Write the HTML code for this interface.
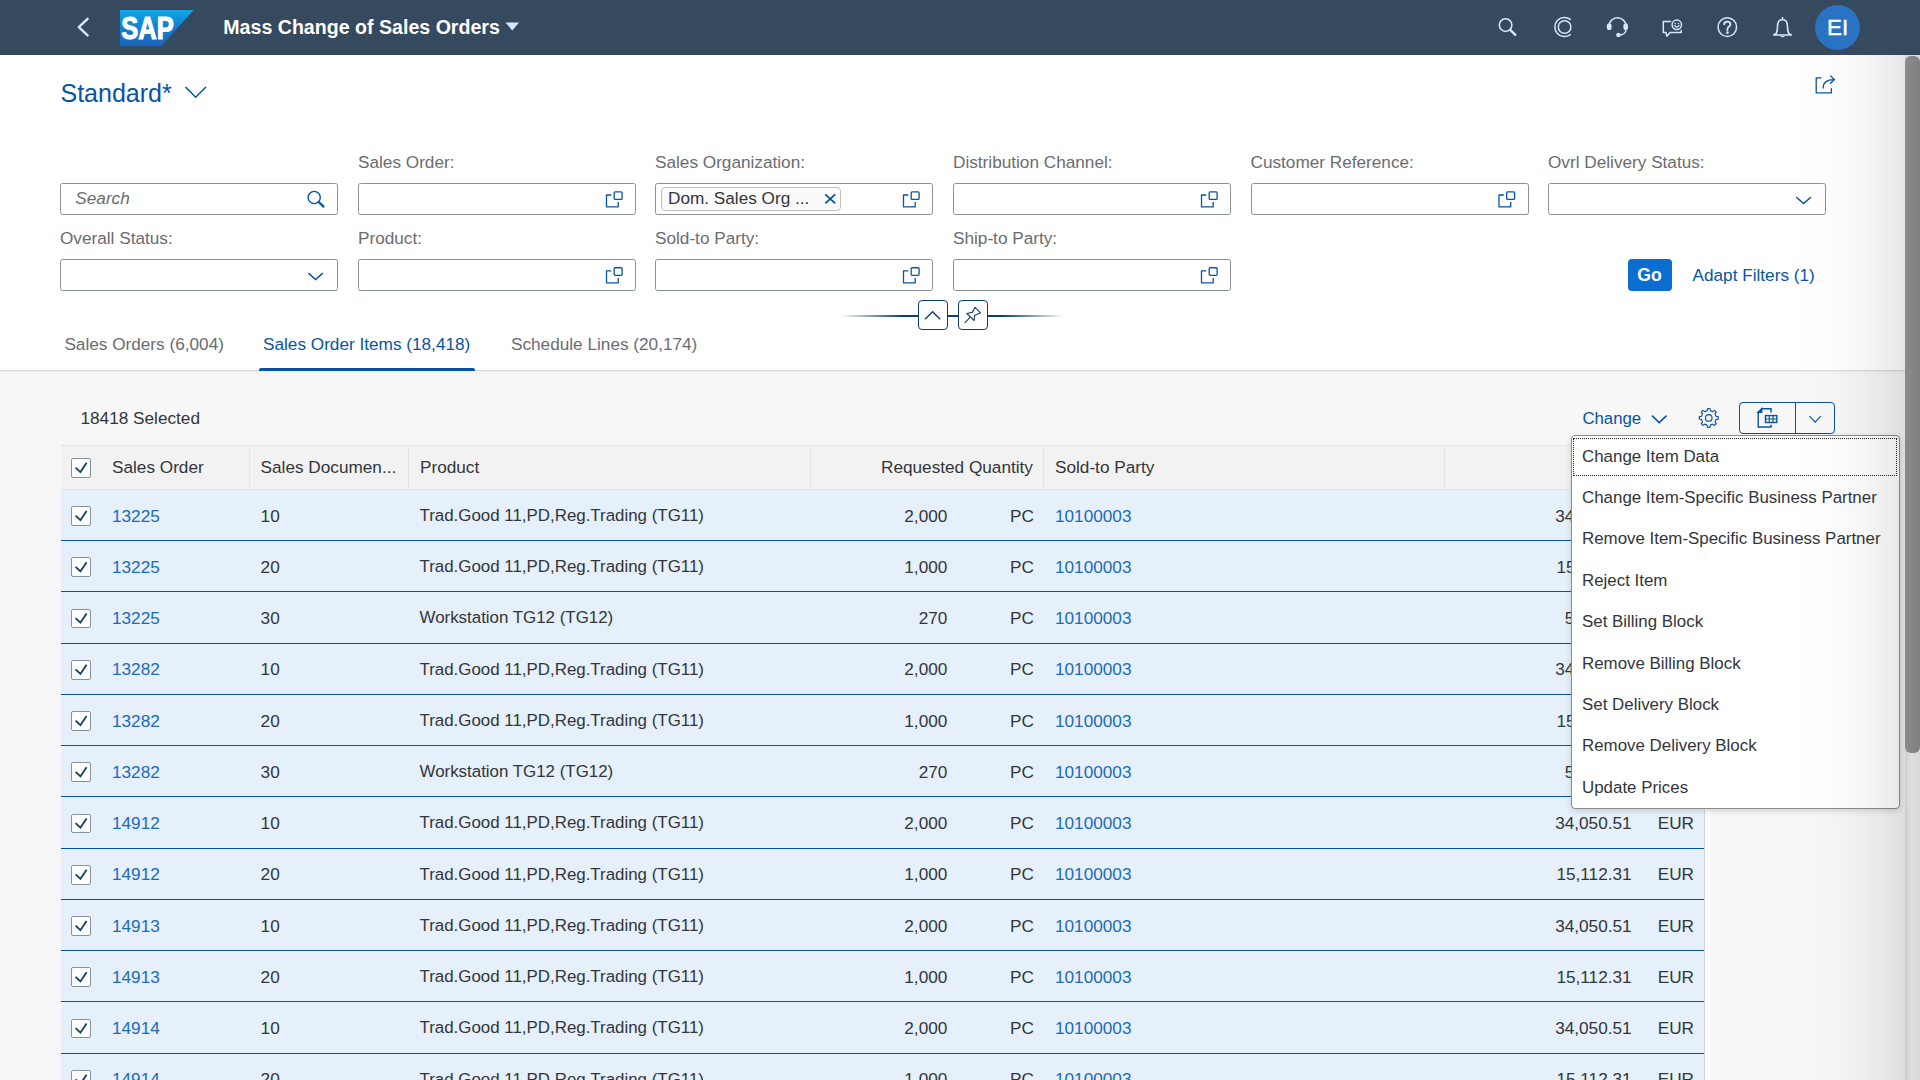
<!DOCTYPE html><html><head><meta charset="utf-8"><style>
*{margin:0;padding:0;box-sizing:border-box}
html,body{width:1920px;height:1080px;overflow:hidden;background:#f7f7f7;font-family:"Liberation Sans",sans-serif}
.t{position:absolute;line-height:1;white-space:nowrap}
.a{position:absolute}
svg{position:absolute;overflow:visible}
</style></head><body>
<div class="a" style="left:0;top:0;width:1920px;height:54.5px;background:#354a5f"></div>
<svg style="left:0;top:0" width="1" height="1"><path d="M87.6 18.8 L78.8 27.2 L87.6 35.4" fill="none" stroke="#d1e8ff" stroke-width="2.4" stroke-linecap="round" stroke-linejoin="round"/></svg>
<svg style="left:0;top:0" width="1" height="1"><defs><linearGradient id="lg" x1="0" y1="0" x2="0" y2="1"><stop offset="0" stop-color="#12a6e8"/><stop offset="0.35" stop-color="#1189d6"/><stop offset="0.7" stop-color="#1673c6"/><stop offset="1" stop-color="#1a64b8"/></linearGradient></defs>
<path d="M120 10 H193.8 L161 46.3 H120 Z" fill="url(#lg)"/>
<text x="121.2" y="39.2" font-family="Liberation Sans" font-weight="700" font-size="31" fill="#fff" stroke="#fff" stroke-width="1.1" textLength="52.5" lengthAdjust="spacingAndGlyphs">SAP</text></svg>
<div class="t" style="left:223.30px;top:17.61px;font-size:19.6px;color:#fff;font-weight:700;">Mass Change of Sales Orders</div>
<svg style="left:0;top:0" width="1" height="1"><path d="M505.5 22.5 H519 L512.25 30.5 Z" fill="#d1e8ff"/></svg>
<svg style="left:0;top:0" width="1" height="1">
<g fill="none" stroke="#d1e8ff" stroke-width="1.5" stroke-linecap="round">
 <circle cx="1505.6" cy="25.1" r="6.3"/>
 <path d="M1510 29.6 L1515.3 34.9" stroke-width="2.3"/>
 <path d="M1570.3 19.4 A9.6 9.6 0 1 0 1570.3 34.6"/>
 <circle cx="1564.6" cy="27" r="6.3"/>
 <path d="M1608.8 26.5 A8.7 8.7 0 0 1 1626.2 26.5"/>
 <path d="M1626 30 Q1625.5 34.6 1619 35.2"/>
 <circle cx="1727.3" cy="27.1" r="9.3"/>
 <path d="M1724.2 24.3 Q1724.2 21.6 1727.3 21.6 Q1730.4 21.6 1730.4 24.2 Q1730.4 26 1728.5 27 Q1727.4 27.7 1727.4 30" stroke-width="1.9"/>
 <path d="M1670.6 21.4 H1663.3 V32.4 H1666 L1666.8 36.2 L1670.2 32.4 H1681.2 V30.6" stroke-linejoin="round"/>
 <circle cx="1676.8" cy="24.8" r="4.7"/>
 <path d="M1674.6 25.6 Q1676.8 28.4 1679 25.6" stroke-width="1.3"/>
 <path d="M1782.5 17.6 V19.2 M1776.3 33.3 Q1777.6 30.5 1777.5 26.3 Q1777.6 19.6 1782.5 19.5 Q1787.4 19.6 1787.5 26.3 Q1787.4 30.5 1788.7 33.3 L1791.3 35 H1773.7 Z" stroke-linejoin="round" stroke-width="1.6"/>
</g>
<g fill="#d1e8ff">
 <rect x="1606.8" y="23.6" width="4.8" height="6.5" rx="2"/>
 <rect x="1623.4" y="23.6" width="4.6" height="6.5" rx="2"/>
 <circle cx="1618.4" cy="35" r="2.2"/>
 <circle cx="1727.4" cy="32.6" r="1.4"/>
 <circle cx="1675.2" cy="23.6" r="0.8"/><circle cx="1678.4" cy="23.6" r="0.8"/>
 <path d="M1780 36 Q1782.5 38.5 1785 36 Z"/>
</g></svg>
<div class="a" style="left:1815px;top:5px;width:45px;height:45px;border-radius:50%;background:#2a73c3"></div>
<div class="t" style="left:1837.70px;top:17.04px;font-size:22.4px;color:#fff;font-weight:400;transform:translateX(-50%);-webkit-text-stroke:0.45px #fff;">EI</div>
<div class="a" style="left:0;top:54.5px;width:1920px;height:316.5px;background:#fff"></div>
<div class="a" style="left:0;top:370px;width:1920px;height:1px;background:#d9d9d9"></div>
<div class="a" style="left:0;top:371px;width:1920px;height:3px;background:linear-gradient(rgba(0,0,0,0.04),rgba(0,0,0,0))"></div>
<div class="t" style="left:60.50px;top:80.54px;font-size:25px;color:#0854a0;font-weight:400;">Standard*</div>
<svg style="left:0;top:0" width="1" height="1"><path d="M185.5 87 L195.7 97.2 L205.9 87" fill="none" stroke="#0854a0" stroke-width="1.6"/></svg>
<svg style="left:0;top:0" width="1" height="1"><g fill="none" stroke="#0854a0" stroke-width="1.3" stroke-linecap="round" stroke-linejoin="round"><path d="M1821 77.9 H1816.2 V92.8 H1831.4 V88.6"/><path d="M1823.2 88 Q1823.2 79.6 1834 79.6"/><path d="M1830.6 75.9 L1834.4 79.5 L1830.6 83.2"/></g></svg>
<div class="a" style="left:60px;top:183.3px;width:278px;height:31.5px;border:1px solid #89919a;border-radius:2.5px;background:#fff"></div>
<div class="t" style="left:358.00px;top:154.44px;font-size:17.2px;color:#6a6d70;font-weight:400;">Sales Order:</div>
<div class="a" style="left:358px;top:183.3px;width:278px;height:31.5px;border:1px solid #89919a;border-radius:2.5px;background:#fff"></div>
<div class="t" style="left:655.00px;top:154.44px;font-size:17.2px;color:#6a6d70;font-weight:400;">Sales Organization:</div>
<div class="a" style="left:655px;top:183.3px;width:278px;height:31.5px;border:1px solid #89919a;border-radius:2.5px;background:#fff"></div>
<div class="t" style="left:953.00px;top:154.44px;font-size:17.2px;color:#6a6d70;font-weight:400;">Distribution Channel:</div>
<div class="a" style="left:953px;top:183.3px;width:278px;height:31.5px;border:1px solid #89919a;border-radius:2.5px;background:#fff"></div>
<div class="t" style="left:1250.50px;top:154.44px;font-size:17.2px;color:#6a6d70;font-weight:400;">Customer Reference:</div>
<div class="a" style="left:1250.5px;top:183.3px;width:278px;height:31.5px;border:1px solid #89919a;border-radius:2.5px;background:#fff"></div>
<div class="t" style="left:1548.00px;top:154.44px;font-size:17.2px;color:#6a6d70;font-weight:400;">Ovrl Delivery Status:</div>
<div class="a" style="left:1548px;top:183.3px;width:278px;height:31.5px;border:1px solid #89919a;border-radius:2.5px;background:#fff"></div>
<div class="t" style="left:60.00px;top:230.44px;font-size:17.2px;color:#6a6d70;font-weight:400;">Overall Status:</div>
<div class="a" style="left:60px;top:259.2px;width:278px;height:31.5px;border:1px solid #89919a;border-radius:2.5px;background:#fff"></div>
<div class="t" style="left:358.00px;top:230.44px;font-size:17.2px;color:#6a6d70;font-weight:400;">Product:</div>
<div class="a" style="left:358px;top:259.2px;width:278px;height:31.5px;border:1px solid #89919a;border-radius:2.5px;background:#fff"></div>
<div class="t" style="left:655.00px;top:230.44px;font-size:17.2px;color:#6a6d70;font-weight:400;">Sold-to Party:</div>
<div class="a" style="left:655px;top:259.2px;width:278px;height:31.5px;border:1px solid #89919a;border-radius:2.5px;background:#fff"></div>
<div class="t" style="left:953.00px;top:230.44px;font-size:17.2px;color:#6a6d70;font-weight:400;">Ship-to Party:</div>
<div class="a" style="left:953px;top:259.2px;width:278px;height:31.5px;border:1px solid #89919a;border-radius:2.5px;background:#fff"></div>
<div class="t" style="left:75.30px;top:190.44px;font-size:17.2px;color:#6a6d70;font-weight:400;font-style:italic;">Search</div>
<svg style="left:0;top:0" width="1" height="1"><g fill="none" stroke="#0854a0" stroke-width="1.4"><circle cx="314.2" cy="197.5" r="6.1"/><path d="M318.6 201.9 L323.6 206.6" stroke-width="2.2" stroke-linecap="round"/></g></svg>
<svg style="left:0;top:0" width="1" height="1"><g fill="none" stroke="#0854a0" stroke-width="1.3"><rect x="614.20" y="191.85" width="7.9" height="7.6" rx="1"/><path d="M611.30 195.00 H606.50 V206.90 H618.20 V202.10" stroke-linejoin="round"/></g></svg>
<svg style="left:0;top:0" width="1" height="1"><g fill="none" stroke="#0854a0" stroke-width="1.3"><rect x="911.20" y="191.85" width="7.9" height="7.6" rx="1"/><path d="M908.30 195.00 H903.50 V206.90 H915.20 V202.10" stroke-linejoin="round"/></g></svg>
<svg style="left:0;top:0" width="1" height="1"><g fill="none" stroke="#0854a0" stroke-width="1.3"><rect x="1209.20" y="191.85" width="7.9" height="7.6" rx="1"/><path d="M1206.30 195.00 H1201.50 V206.90 H1213.20 V202.10" stroke-linejoin="round"/></g></svg>
<svg style="left:0;top:0" width="1" height="1"><g fill="none" stroke="#0854a0" stroke-width="1.3"><rect x="1506.70" y="191.85" width="7.9" height="7.6" rx="1"/><path d="M1503.80 195.00 H1499.00 V206.90 H1510.70 V202.10" stroke-linejoin="round"/></g></svg>
<svg style="left:0;top:0" width="1" height="1"><path d="M1796.4 197.2 L1803.6000000000001 203.6 L1810.8000000000002 197.2" fill="none" stroke="#0854a0" stroke-width="1.5"/></svg>
<svg style="left:0;top:0" width="1" height="1"><path d="M308.4 273.1 L315.59999999999997 279.5 L322.79999999999995 273.1" fill="none" stroke="#0854a0" stroke-width="1.5"/></svg>
<svg style="left:0;top:0" width="1" height="1"><g fill="none" stroke="#0854a0" stroke-width="1.3"><rect x="614.20" y="267.75" width="7.9" height="7.6" rx="1"/><path d="M611.30 270.90 H606.50 V282.80 H618.20 V278.00" stroke-linejoin="round"/></g></svg>
<svg style="left:0;top:0" width="1" height="1"><g fill="none" stroke="#0854a0" stroke-width="1.3"><rect x="911.20" y="267.75" width="7.9" height="7.6" rx="1"/><path d="M908.30 270.90 H903.50 V282.80 H915.20 V278.00" stroke-linejoin="round"/></g></svg>
<svg style="left:0;top:0" width="1" height="1"><g fill="none" stroke="#0854a0" stroke-width="1.3"><rect x="1209.20" y="267.75" width="7.9" height="7.6" rx="1"/><path d="M1206.30 270.90 H1201.50 V282.80 H1213.20 V278.00" stroke-linejoin="round"/></g></svg>
<div class="a" style="left:661.3px;top:187.4px;width:179.5px;height:23.6px;border:1px solid #bfbfbf;border-radius:4px;background:#fafafa"></div>
<div class="t" style="left:668.00px;top:190.14px;font-size:17.2px;color:#32363a;font-weight:400;">Dom. Sales Org ...</div>
<svg style="left:0;top:0" width="1" height="1"><path d="M825.3 194.3 L835.2 203.4 M835.2 194.3 L825.3 203.4" stroke="#0854a0" stroke-width="1.8"/></svg>
<div class="a" style="left:1628px;top:259.2px;width:44px;height:31.5px;border-radius:4px;background:#0a6ed1"></div>
<div class="t" style="left:1637.30px;top:266.60px;font-size:17.6px;color:#fff;font-weight:700;">Go</div>
<div class="t" style="left:1692.50px;top:266.84px;font-size:17.2px;color:#0854a0;font-weight:400;">Adapt Filters (1)</div>
<div class="a" style="left:840px;top:315px;width:224px;height:2px;background:linear-gradient(90deg,rgba(8,84,160,0),#0b3f6e 28%,#0b3f6e 72%,rgba(8,84,160,0))"></div>
<div class="a" style="left:918px;top:300.2px;width:29.7px;height:29.6px;border:1px solid #0b3f6e;border-radius:4px;background:#fff"></div>
<div class="a" style="left:958px;top:300.2px;width:29.7px;height:29.6px;border:1px solid #0b3f6e;border-radius:4px;background:#fff"></div>
<svg style="left:0;top:0" width="1" height="1"><path d="M925 319.3 L932.6 311.8 L940.2 319.3" fill="none" stroke="#0b3f6e" stroke-width="1.4"/></svg>
<svg style="left:0;top:0" width="1" height="1"><g fill="none" stroke="#1b4468" stroke-width="1.15" stroke-linejoin="round" stroke-linecap="round"><path d="M966.8 313.5 L972.3 312.4 L975.1 307.3 L980.5 312.8 L974.6 315.5 L974.2 320.5 Z"/><path d="M969.8 317.7 L965 322.6"/></g></svg>
<div class="t" style="left:64.40px;top:336.04px;font-size:17.2px;color:#6a6d70;font-weight:400;">Sales Orders (6,004)</div>
<div class="t" style="left:263.00px;top:336.04px;font-size:17.2px;color:#0854a0;font-weight:400;">Sales Order Items (18,418)</div>
<div class="t" style="left:511.00px;top:336.04px;font-size:17.2px;color:#6a6d70;font-weight:400;">Schedule Lines (20,174)</div>
<div class="a" style="left:259.4px;top:367.6px;width:215.6px;height:3.4px;background:#0854a0;border-radius:2px 2px 0 0"></div>
<div class="t" style="left:80.50px;top:410.34px;font-size:17.2px;color:#32363a;font-weight:400;">18418 Selected</div>
<div class="t" style="left:1582.40px;top:410.78px;font-size:16.8px;color:#0854a0;font-weight:400;">Change</div>
<svg style="left:0;top:0" width="1" height="1"><path d="M1652 415.6 L1659.25 422.6 L1666.5 415.6" fill="none" stroke="#0854a0" stroke-width="1.5"/></svg>
<svg style="left:0;top:0" width="1" height="1"><g fill="none" stroke="#0854a0" stroke-width="1.15" stroke-linejoin="round"><path d="M1715.97 416.29 L1718.17 416.67 L1718.17 419.13 L1715.97 419.51 L1715.00 421.86 L1716.28 423.69 L1714.54 425.43 L1712.71 424.15 L1710.36 425.12 L1709.98 427.32 L1707.52 427.32 L1707.14 425.12 L1704.79 424.15 L1702.96 425.43 L1701.22 423.69 L1702.50 421.86 L1701.53 419.51 L1699.33 419.13 L1699.33 416.67 L1701.53 416.29 L1702.50 413.94 L1701.22 412.11 L1702.96 410.37 L1704.79 411.65 L1707.14 410.68 L1707.52 408.48 L1709.98 408.48 L1710.36 410.68 L1712.71 411.65 L1714.54 410.37 L1716.28 412.11 L1715.00 413.94 Z"/><circle cx="1708.75" cy="417.9" r="3.3"/></g></svg>
<div class="a" style="left:1739.2px;top:402px;width:95.5px;height:31.6px;border:1px solid #0854a0;border-radius:4px;background:#f7f7f7"></div>
<div class="a" style="left:1795px;top:402px;width:1px;height:31.6px;background:#0854a0"></div>
<svg style="left:0;top:0" width="1" height="1"><path d="M1809.5 416.2 L1815.15 422.09999999999997 L1820.8 416.2" fill="none" stroke="#0854a0" stroke-width="1.15"/></svg>
<svg style="left:0;top:0" width="1" height="1"><g fill="none" stroke="#0854a0" stroke-width="1.4"><path d="M1761.5 408.8 H1771 V412.5 M1758.2 412 V427 H1771 V424.8"/><path d="M1758 412.3 L1761.7 408.6 V412.3 Z" fill="#0854a0"/><rect x="1765.5" y="415.6" width="11.3" height="6.9"/><path d="M1765.5 419.05 H1776.8 M1769.27 415.6 V422.5 M1773.03 415.6 V422.5" stroke-width="1.1"/></g></svg>
<div class="a" style="left:60.5px;top:444.75px;width:1643.5px;height:1px;background:#e4e4e4"></div>
<div class="a" style="left:60.5px;top:445.75px;width:1643.5px;height:44.0px;background:#f2f2f2;border-bottom:1px solid #e4e4e4"></div>
<div class="a" style="left:248.9px;top:448px;width:1px;height:39.5px;background:#e4e4e4"></div>
<div class="a" style="left:408.0px;top:448px;width:1px;height:39.5px;background:#e4e4e4"></div>
<div class="a" style="left:809.9px;top:448px;width:1px;height:39.5px;background:#e4e4e4"></div>
<div class="a" style="left:1042.8px;top:448px;width:1px;height:39.5px;background:#e4e4e4"></div>
<div class="a" style="left:1444.1px;top:448px;width:1px;height:39.5px;background:#e4e4e4"></div>
<div class="a" style="left:71px;top:458.05px;width:19.8px;height:19.7px;border:1px solid #89919a;border-radius:2px;background:#fff"></div><svg style="left:0;top:0" width="1" height="1"><path d="M75.6 467.55 L80.4 472.05 L86.6 462.85" fill="none" stroke="#10406a" stroke-width="1.85"/></svg>
<div class="t" style="left:112.00px;top:459.19px;font-size:17.2px;color:#32363a;font-weight:400;">Sales Order</div>
<div class="t" style="left:260.60px;top:459.19px;font-size:17.2px;color:#32363a;font-weight:400;">Sales Documen...</div>
<div class="t" style="left:420.00px;top:459.19px;font-size:17.2px;color:#32363a;font-weight:400;">Product</div>
<div class="t" style="right:887.10px;top:459.19px;font-size:17.2px;color:#32363a;font-weight:400;">Requested Quantity</div>
<div class="t" style="left:1055.00px;top:459.19px;font-size:17.2px;color:#32363a;font-weight:400;">Sold-to Party</div>
<div class="a" style="left:60.5px;top:489.75px;width:1643.5px;height:51.25px;background:#e5f0fa;border-bottom:1px solid #0854a0"></div>
<div class="a" style="left:71px;top:506.20px;width:19.8px;height:19.7px;border:1px solid #89919a;border-radius:2px;background:#fff"></div><svg style="left:0;top:0" width="1" height="1"><path d="M75.6 515.70 L80.4 520.20 L86.6 511.00" fill="none" stroke="#10406a" stroke-width="1.85"/></svg>
<div class="t" style="left:112.00px;top:507.59px;font-size:17.2px;color:#1a6bbd;font-weight:400;">13225</div>
<div class="t" style="left:260.60px;top:507.59px;font-size:17.2px;color:#32363a;font-weight:400;">10</div>
<div class="t" style="left:419.50px;top:507.84px;font-size:16.9px;color:#32363a;font-weight:400;">Trad.Good 11,PD,Reg.Trading (TG11)</div>
<div class="t" style="right:972.70px;top:507.59px;font-size:17.2px;color:#32363a;font-weight:400;">2,000</div>
<div class="t" style="right:886.00px;top:507.59px;font-size:17.2px;color:#32363a;font-weight:400;">PC</div>
<div class="t" style="left:1055.00px;top:507.59px;font-size:17.2px;color:#1a6bbd;font-weight:400;">10100003</div>
<div class="t" style="right:288.40px;top:507.59px;font-size:17.2px;color:#32363a;font-weight:400;">34,050.51</div>
<div class="t" style="right:226.00px;top:507.59px;font-size:17.2px;color:#32363a;font-weight:400;">EUR</div>
<div class="a" style="left:60.5px;top:541.00px;width:1643.5px;height:51.25px;background:#e5f0fa;border-bottom:1px solid #0854a0"></div>
<div class="a" style="left:71px;top:557.45px;width:19.8px;height:19.7px;border:1px solid #89919a;border-radius:2px;background:#fff"></div><svg style="left:0;top:0" width="1" height="1"><path d="M75.6 566.95 L80.4 571.45 L86.6 562.25" fill="none" stroke="#10406a" stroke-width="1.85"/></svg>
<div class="t" style="left:112.00px;top:558.84px;font-size:17.2px;color:#1a6bbd;font-weight:400;">13225</div>
<div class="t" style="left:260.60px;top:558.84px;font-size:17.2px;color:#32363a;font-weight:400;">20</div>
<div class="t" style="left:419.50px;top:559.09px;font-size:16.9px;color:#32363a;font-weight:400;">Trad.Good 11,PD,Reg.Trading (TG11)</div>
<div class="t" style="right:972.70px;top:558.84px;font-size:17.2px;color:#32363a;font-weight:400;">1,000</div>
<div class="t" style="right:886.00px;top:558.84px;font-size:17.2px;color:#32363a;font-weight:400;">PC</div>
<div class="t" style="left:1055.00px;top:558.84px;font-size:17.2px;color:#1a6bbd;font-weight:400;">10100003</div>
<div class="t" style="right:288.40px;top:558.84px;font-size:17.2px;color:#32363a;font-weight:400;">15,112.31</div>
<div class="t" style="right:226.00px;top:558.84px;font-size:17.2px;color:#32363a;font-weight:400;">EUR</div>
<div class="a" style="left:60.5px;top:592.25px;width:1643.5px;height:51.25px;background:#e5f0fa;border-bottom:1px solid #0854a0"></div>
<div class="a" style="left:71px;top:608.70px;width:19.8px;height:19.7px;border:1px solid #89919a;border-radius:2px;background:#fff"></div><svg style="left:0;top:0" width="1" height="1"><path d="M75.6 618.20 L80.4 622.70 L86.6 613.50" fill="none" stroke="#10406a" stroke-width="1.85"/></svg>
<div class="t" style="left:112.00px;top:610.09px;font-size:17.2px;color:#1a6bbd;font-weight:400;">13225</div>
<div class="t" style="left:260.60px;top:610.09px;font-size:17.2px;color:#32363a;font-weight:400;">30</div>
<div class="t" style="left:419.50px;top:610.34px;font-size:16.9px;color:#32363a;font-weight:400;">Workstation TG12 (TG12)</div>
<div class="t" style="right:972.70px;top:610.09px;font-size:17.2px;color:#32363a;font-weight:400;">270</div>
<div class="t" style="right:886.00px;top:610.09px;font-size:17.2px;color:#32363a;font-weight:400;">PC</div>
<div class="t" style="left:1055.00px;top:610.09px;font-size:17.2px;color:#1a6bbd;font-weight:400;">10100003</div>
<div class="t" style="right:288.40px;top:610.09px;font-size:17.2px;color:#32363a;font-weight:400;">5,045.07</div>
<div class="t" style="right:226.00px;top:610.09px;font-size:17.2px;color:#32363a;font-weight:400;">EUR</div>
<div class="a" style="left:60.5px;top:643.50px;width:1643.5px;height:51.25px;background:#e5f0fa;border-bottom:1px solid #0854a0"></div>
<div class="a" style="left:71px;top:659.95px;width:19.8px;height:19.7px;border:1px solid #89919a;border-radius:2px;background:#fff"></div><svg style="left:0;top:0" width="1" height="1"><path d="M75.6 669.45 L80.4 673.95 L86.6 664.75" fill="none" stroke="#10406a" stroke-width="1.85"/></svg>
<div class="t" style="left:112.00px;top:661.34px;font-size:17.2px;color:#1a6bbd;font-weight:400;">13282</div>
<div class="t" style="left:260.60px;top:661.34px;font-size:17.2px;color:#32363a;font-weight:400;">10</div>
<div class="t" style="left:419.50px;top:661.59px;font-size:16.9px;color:#32363a;font-weight:400;">Trad.Good 11,PD,Reg.Trading (TG11)</div>
<div class="t" style="right:972.70px;top:661.34px;font-size:17.2px;color:#32363a;font-weight:400;">2,000</div>
<div class="t" style="right:886.00px;top:661.34px;font-size:17.2px;color:#32363a;font-weight:400;">PC</div>
<div class="t" style="left:1055.00px;top:661.34px;font-size:17.2px;color:#1a6bbd;font-weight:400;">10100003</div>
<div class="t" style="right:288.40px;top:661.34px;font-size:17.2px;color:#32363a;font-weight:400;">34,050.51</div>
<div class="t" style="right:226.00px;top:661.34px;font-size:17.2px;color:#32363a;font-weight:400;">EUR</div>
<div class="a" style="left:60.5px;top:694.75px;width:1643.5px;height:51.25px;background:#e5f0fa;border-bottom:1px solid #0854a0"></div>
<div class="a" style="left:71px;top:711.20px;width:19.8px;height:19.7px;border:1px solid #89919a;border-radius:2px;background:#fff"></div><svg style="left:0;top:0" width="1" height="1"><path d="M75.6 720.70 L80.4 725.20 L86.6 716.00" fill="none" stroke="#10406a" stroke-width="1.85"/></svg>
<div class="t" style="left:112.00px;top:712.59px;font-size:17.2px;color:#1a6bbd;font-weight:400;">13282</div>
<div class="t" style="left:260.60px;top:712.59px;font-size:17.2px;color:#32363a;font-weight:400;">20</div>
<div class="t" style="left:419.50px;top:712.84px;font-size:16.9px;color:#32363a;font-weight:400;">Trad.Good 11,PD,Reg.Trading (TG11)</div>
<div class="t" style="right:972.70px;top:712.59px;font-size:17.2px;color:#32363a;font-weight:400;">1,000</div>
<div class="t" style="right:886.00px;top:712.59px;font-size:17.2px;color:#32363a;font-weight:400;">PC</div>
<div class="t" style="left:1055.00px;top:712.59px;font-size:17.2px;color:#1a6bbd;font-weight:400;">10100003</div>
<div class="t" style="right:288.40px;top:712.59px;font-size:17.2px;color:#32363a;font-weight:400;">15,112.31</div>
<div class="t" style="right:226.00px;top:712.59px;font-size:17.2px;color:#32363a;font-weight:400;">EUR</div>
<div class="a" style="left:60.5px;top:746.00px;width:1643.5px;height:51.25px;background:#e5f0fa;border-bottom:1px solid #0854a0"></div>
<div class="a" style="left:71px;top:762.45px;width:19.8px;height:19.7px;border:1px solid #89919a;border-radius:2px;background:#fff"></div><svg style="left:0;top:0" width="1" height="1"><path d="M75.6 771.95 L80.4 776.45 L86.6 767.25" fill="none" stroke="#10406a" stroke-width="1.85"/></svg>
<div class="t" style="left:112.00px;top:763.84px;font-size:17.2px;color:#1a6bbd;font-weight:400;">13282</div>
<div class="t" style="left:260.60px;top:763.84px;font-size:17.2px;color:#32363a;font-weight:400;">30</div>
<div class="t" style="left:419.50px;top:764.09px;font-size:16.9px;color:#32363a;font-weight:400;">Workstation TG12 (TG12)</div>
<div class="t" style="right:972.70px;top:763.84px;font-size:17.2px;color:#32363a;font-weight:400;">270</div>
<div class="t" style="right:886.00px;top:763.84px;font-size:17.2px;color:#32363a;font-weight:400;">PC</div>
<div class="t" style="left:1055.00px;top:763.84px;font-size:17.2px;color:#1a6bbd;font-weight:400;">10100003</div>
<div class="t" style="right:288.40px;top:763.84px;font-size:17.2px;color:#32363a;font-weight:400;">5,045.07</div>
<div class="t" style="right:226.00px;top:763.84px;font-size:17.2px;color:#32363a;font-weight:400;">EUR</div>
<div class="a" style="left:60.5px;top:797.25px;width:1643.5px;height:51.25px;background:#e5f0fa;border-bottom:1px solid #0854a0"></div>
<div class="a" style="left:71px;top:813.70px;width:19.8px;height:19.7px;border:1px solid #89919a;border-radius:2px;background:#fff"></div><svg style="left:0;top:0" width="1" height="1"><path d="M75.6 823.20 L80.4 827.70 L86.6 818.50" fill="none" stroke="#10406a" stroke-width="1.85"/></svg>
<div class="t" style="left:112.00px;top:815.09px;font-size:17.2px;color:#1a6bbd;font-weight:400;">14912</div>
<div class="t" style="left:260.60px;top:815.09px;font-size:17.2px;color:#32363a;font-weight:400;">10</div>
<div class="t" style="left:419.50px;top:815.34px;font-size:16.9px;color:#32363a;font-weight:400;">Trad.Good 11,PD,Reg.Trading (TG11)</div>
<div class="t" style="right:972.70px;top:815.09px;font-size:17.2px;color:#32363a;font-weight:400;">2,000</div>
<div class="t" style="right:886.00px;top:815.09px;font-size:17.2px;color:#32363a;font-weight:400;">PC</div>
<div class="t" style="left:1055.00px;top:815.09px;font-size:17.2px;color:#1a6bbd;font-weight:400;">10100003</div>
<div class="t" style="right:288.40px;top:815.09px;font-size:17.2px;color:#32363a;font-weight:400;">34,050.51</div>
<div class="t" style="right:226.00px;top:815.09px;font-size:17.2px;color:#32363a;font-weight:400;">EUR</div>
<div class="a" style="left:60.5px;top:848.50px;width:1643.5px;height:51.25px;background:#e5f0fa;border-bottom:1px solid #0854a0"></div>
<div class="a" style="left:71px;top:864.95px;width:19.8px;height:19.7px;border:1px solid #89919a;border-radius:2px;background:#fff"></div><svg style="left:0;top:0" width="1" height="1"><path d="M75.6 874.45 L80.4 878.95 L86.6 869.75" fill="none" stroke="#10406a" stroke-width="1.85"/></svg>
<div class="t" style="left:112.00px;top:866.34px;font-size:17.2px;color:#1a6bbd;font-weight:400;">14912</div>
<div class="t" style="left:260.60px;top:866.34px;font-size:17.2px;color:#32363a;font-weight:400;">20</div>
<div class="t" style="left:419.50px;top:866.59px;font-size:16.9px;color:#32363a;font-weight:400;">Trad.Good 11,PD,Reg.Trading (TG11)</div>
<div class="t" style="right:972.70px;top:866.34px;font-size:17.2px;color:#32363a;font-weight:400;">1,000</div>
<div class="t" style="right:886.00px;top:866.34px;font-size:17.2px;color:#32363a;font-weight:400;">PC</div>
<div class="t" style="left:1055.00px;top:866.34px;font-size:17.2px;color:#1a6bbd;font-weight:400;">10100003</div>
<div class="t" style="right:288.40px;top:866.34px;font-size:17.2px;color:#32363a;font-weight:400;">15,112.31</div>
<div class="t" style="right:226.00px;top:866.34px;font-size:17.2px;color:#32363a;font-weight:400;">EUR</div>
<div class="a" style="left:60.5px;top:899.75px;width:1643.5px;height:51.25px;background:#e5f0fa;border-bottom:1px solid #0854a0"></div>
<div class="a" style="left:71px;top:916.20px;width:19.8px;height:19.7px;border:1px solid #89919a;border-radius:2px;background:#fff"></div><svg style="left:0;top:0" width="1" height="1"><path d="M75.6 925.70 L80.4 930.20 L86.6 921.00" fill="none" stroke="#10406a" stroke-width="1.85"/></svg>
<div class="t" style="left:112.00px;top:917.59px;font-size:17.2px;color:#1a6bbd;font-weight:400;">14913</div>
<div class="t" style="left:260.60px;top:917.59px;font-size:17.2px;color:#32363a;font-weight:400;">10</div>
<div class="t" style="left:419.50px;top:917.84px;font-size:16.9px;color:#32363a;font-weight:400;">Trad.Good 11,PD,Reg.Trading (TG11)</div>
<div class="t" style="right:972.70px;top:917.59px;font-size:17.2px;color:#32363a;font-weight:400;">2,000</div>
<div class="t" style="right:886.00px;top:917.59px;font-size:17.2px;color:#32363a;font-weight:400;">PC</div>
<div class="t" style="left:1055.00px;top:917.59px;font-size:17.2px;color:#1a6bbd;font-weight:400;">10100003</div>
<div class="t" style="right:288.40px;top:917.59px;font-size:17.2px;color:#32363a;font-weight:400;">34,050.51</div>
<div class="t" style="right:226.00px;top:917.59px;font-size:17.2px;color:#32363a;font-weight:400;">EUR</div>
<div class="a" style="left:60.5px;top:951.00px;width:1643.5px;height:51.25px;background:#e5f0fa;border-bottom:1px solid #0854a0"></div>
<div class="a" style="left:71px;top:967.45px;width:19.8px;height:19.7px;border:1px solid #89919a;border-radius:2px;background:#fff"></div><svg style="left:0;top:0" width="1" height="1"><path d="M75.6 976.95 L80.4 981.45 L86.6 972.25" fill="none" stroke="#10406a" stroke-width="1.85"/></svg>
<div class="t" style="left:112.00px;top:968.84px;font-size:17.2px;color:#1a6bbd;font-weight:400;">14913</div>
<div class="t" style="left:260.60px;top:968.84px;font-size:17.2px;color:#32363a;font-weight:400;">20</div>
<div class="t" style="left:419.50px;top:969.09px;font-size:16.9px;color:#32363a;font-weight:400;">Trad.Good 11,PD,Reg.Trading (TG11)</div>
<div class="t" style="right:972.70px;top:968.84px;font-size:17.2px;color:#32363a;font-weight:400;">1,000</div>
<div class="t" style="right:886.00px;top:968.84px;font-size:17.2px;color:#32363a;font-weight:400;">PC</div>
<div class="t" style="left:1055.00px;top:968.84px;font-size:17.2px;color:#1a6bbd;font-weight:400;">10100003</div>
<div class="t" style="right:288.40px;top:968.84px;font-size:17.2px;color:#32363a;font-weight:400;">15,112.31</div>
<div class="t" style="right:226.00px;top:968.84px;font-size:17.2px;color:#32363a;font-weight:400;">EUR</div>
<div class="a" style="left:60.5px;top:1002.25px;width:1643.5px;height:51.25px;background:#e5f0fa;border-bottom:1px solid #0854a0"></div>
<div class="a" style="left:71px;top:1018.70px;width:19.8px;height:19.7px;border:1px solid #89919a;border-radius:2px;background:#fff"></div><svg style="left:0;top:0" width="1" height="1"><path d="M75.6 1028.20 L80.4 1032.70 L86.6 1023.50" fill="none" stroke="#10406a" stroke-width="1.85"/></svg>
<div class="t" style="left:112.00px;top:1020.09px;font-size:17.2px;color:#1a6bbd;font-weight:400;">14914</div>
<div class="t" style="left:260.60px;top:1020.09px;font-size:17.2px;color:#32363a;font-weight:400;">10</div>
<div class="t" style="left:419.50px;top:1020.34px;font-size:16.9px;color:#32363a;font-weight:400;">Trad.Good 11,PD,Reg.Trading (TG11)</div>
<div class="t" style="right:972.70px;top:1020.09px;font-size:17.2px;color:#32363a;font-weight:400;">2,000</div>
<div class="t" style="right:886.00px;top:1020.09px;font-size:17.2px;color:#32363a;font-weight:400;">PC</div>
<div class="t" style="left:1055.00px;top:1020.09px;font-size:17.2px;color:#1a6bbd;font-weight:400;">10100003</div>
<div class="t" style="right:288.40px;top:1020.09px;font-size:17.2px;color:#32363a;font-weight:400;">34,050.51</div>
<div class="t" style="right:226.00px;top:1020.09px;font-size:17.2px;color:#32363a;font-weight:400;">EUR</div>
<div class="a" style="left:60.5px;top:1053.50px;width:1643.5px;height:51.25px;background:#e5f0fa;border-bottom:1px solid #0854a0"></div>
<div class="a" style="left:71px;top:1069.95px;width:19.8px;height:19.7px;border:1px solid #89919a;border-radius:2px;background:#fff"></div><svg style="left:0;top:0" width="1" height="1"><path d="M75.6 1079.45 L80.4 1083.95 L86.6 1074.75" fill="none" stroke="#10406a" stroke-width="1.85"/></svg>
<div class="t" style="left:112.00px;top:1071.34px;font-size:17.2px;color:#1a6bbd;font-weight:400;">14914</div>
<div class="t" style="left:260.60px;top:1071.34px;font-size:17.2px;color:#32363a;font-weight:400;">20</div>
<div class="t" style="left:419.50px;top:1071.59px;font-size:16.9px;color:#32363a;font-weight:400;">Trad.Good 11,PD,Reg.Trading (TG11)</div>
<div class="t" style="right:972.70px;top:1071.34px;font-size:17.2px;color:#32363a;font-weight:400;">1,000</div>
<div class="t" style="right:886.00px;top:1071.34px;font-size:17.2px;color:#32363a;font-weight:400;">PC</div>
<div class="t" style="left:1055.00px;top:1071.34px;font-size:17.2px;color:#1a6bbd;font-weight:400;">10100003</div>
<div class="t" style="right:288.40px;top:1071.34px;font-size:17.2px;color:#32363a;font-weight:400;">15,112.31</div>
<div class="t" style="right:226.00px;top:1071.34px;font-size:17.2px;color:#32363a;font-weight:400;">EUR</div>
<div class="a" style="left:1703.8px;top:445px;width:1px;height:635px;background:#d3d6d9"></div>
<div class="a" style="left:1704.8px;top:445px;width:5px;height:635px;background:#fbfbfb"></div>
<div class="a" style="left:1571px;top:435.4px;width:328.8px;height:373.5px;border:1px solid #8c8c8c;border-radius:4px;background:#fff;box-shadow:0 2px 6px rgba(0,0,0,0.15)"></div>
<div class="a" style="left:1573.3px;top:438.3px;width:323.5px;height:37.5px;border:1px dotted #222"></div>
<div class="t" style="left:1582.00px;top:448.59px;font-size:16.9px;color:#32363a;font-weight:400;">Change Item Data</div>
<div class="t" style="left:1582.00px;top:489.99px;font-size:16.9px;color:#32363a;font-weight:400;">Change Item-Specific Business Partner</div>
<div class="t" style="left:1582.00px;top:531.39px;font-size:16.9px;color:#32363a;font-weight:400;">Remove Item-Specific Business Partner</div>
<div class="t" style="left:1582.00px;top:572.79px;font-size:16.9px;color:#32363a;font-weight:400;">Reject Item</div>
<div class="t" style="left:1582.00px;top:614.19px;font-size:16.9px;color:#32363a;font-weight:400;">Set Billing Block</div>
<div class="t" style="left:1582.00px;top:655.59px;font-size:16.9px;color:#32363a;font-weight:400;">Remove Billing Block</div>
<div class="t" style="left:1582.00px;top:696.99px;font-size:16.9px;color:#32363a;font-weight:400;">Set Delivery Block</div>
<div class="t" style="left:1582.00px;top:738.39px;font-size:16.9px;color:#32363a;font-weight:400;">Remove Delivery Block</div>
<div class="t" style="left:1582.00px;top:779.79px;font-size:16.9px;color:#32363a;font-weight:400;">Update Prices</div>
<div class="a" style="left:1790px;top:54.5px;width:115px;height:1025.5px;background:linear-gradient(90deg,rgba(0,0,0,0) 0%,rgba(0,0,0,0.008) 35%,rgba(0,0,0,0.03) 61%,rgba(0,0,0,0.065) 83%,rgba(0,0,0,0.1) 100%)"></div>
<div class="a" style="left:1905px;top:54.5px;width:15px;height:1025.5px;background:linear-gradient(90deg,#cfcfcf,#dedede 40%,#d9d9d9)"></div>
<div class="a" style="left:1905px;top:55.5px;width:15px;height:697px;border-radius:6px;background:linear-gradient(90deg,#8a8a8a,#808080)"></div>
</body></html>
